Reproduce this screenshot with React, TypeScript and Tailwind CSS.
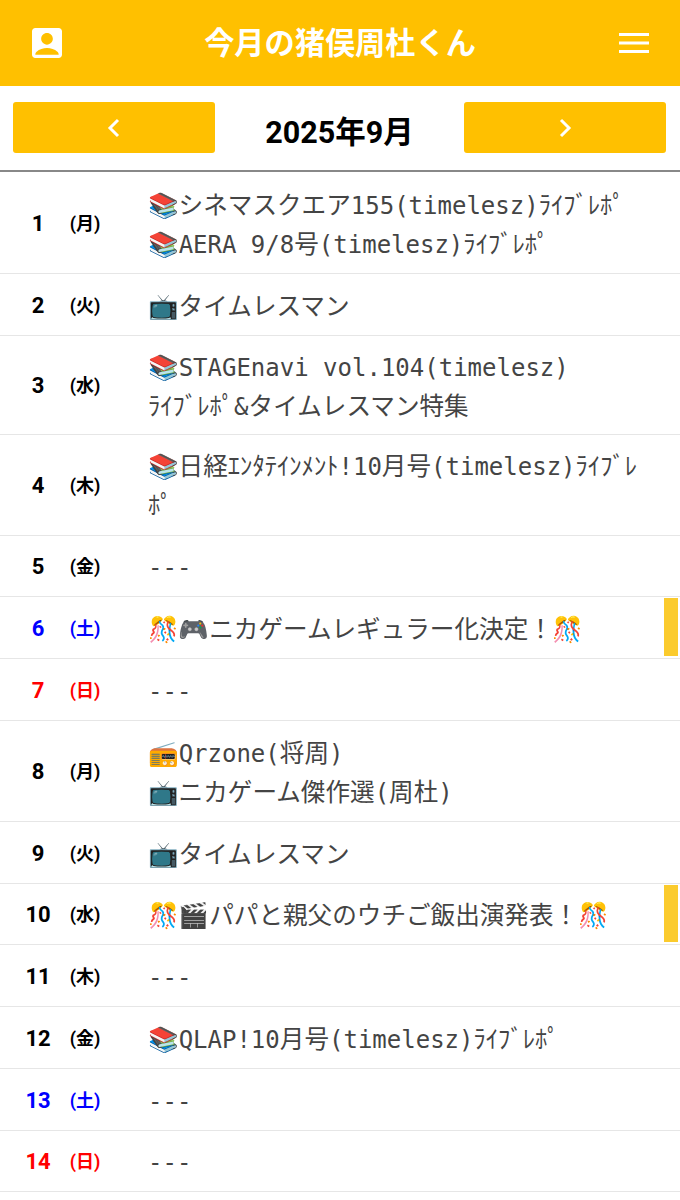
import { MdAccountBox } from 'react-icons/md';

type Day = { d: number; w: string; lines: string[]; mark?: boolean; tight?: boolean };

const days: Day[] = [
  { d: 1, w: '月', lines: ['📚シネマスクエア155(timelesz)ﾗｲﾌﾞﾚﾎﾟ', '📚AERA 9/8号(timelesz)ﾗｲﾌﾞﾚﾎﾟ'] },
  { d: 2, w: '火', lines: ['📺タイムレスマン'] },
  { d: 3, w: '水', lines: ['📚STAGEnavi vol.104(timelesz)', 'ﾗｲﾌﾞﾚﾎﾟ&タイムレスマン特集'], tight: true },
  { d: 4, w: '木', lines: ['📚日経ｴﾝﾀﾃｲﾝﾒﾝﾄ!10月号(timelesz)ﾗｲﾌﾞﾚ', 'ﾎﾟ'] },
  { d: 5, w: '金', lines: ['---'] },
  { d: 6, w: '土', lines: ['🎊🎮ニカゲームレギュラー化決定！🎊'], mark: true },
  { d: 7, w: '日', lines: ['---'] },
  { d: 8, w: '月', lines: ['📻Qrzone(将周)', '📺ニカゲーム傑作選(周杜)'] },
  { d: 9, w: '火', lines: ['📺タイムレスマン'] },
  { d: 10, w: '水', lines: ['🎊🎬パパと親父のウチご飯出演発表！🎊'], mark: true },
  { d: 11, w: '木', lines: ['---'] },
  { d: 12, w: '金', lines: ['📚QLAP!10月号(timelesz)ﾗｲﾌﾞﾚﾎﾟ'] },
  { d: 13, w: '土', lines: ['---'] },
  { d: 14, w: '日', lines: ['---'] },
];

// ascii runs are a little smaller than the kana around them
function Line({ text }: { text: string }) {
  const parts = text.split(/([\x20-\x7e]+)/).filter(Boolean);
  return (
    <>
      {parts.map((p, i) =>
        /^[\x20-\x7e]+$/.test(p) ? (
          <span key={i} className="text-[24px]">{p}</span>
        ) : (
          <span key={i}>{p}</span>
        )
      )}
    </>
  );
}

function Row({ day }: { day: Day }) {
  const color = day.w === '土' ? 'text-[#0000ff]' : day.w === '日' ? 'text-[#ff0000]' : 'text-black';
  return (
    <div className="flex items-center border-b border-[#e6e6e6] relative">
      <div className={`w-[76px] pt-[2px] text-center text-[22px] font-bold ${color}`}>{day.d}</div>
      <div className={`w-[18px] pt-[2px] text-[18px] font-bold whitespace-nowrap flex justify-center ${color}`}>({day.w})</div>
      <div className="ml-[54px] w-[500px] pt-[12.8px] pb-[8.95px] text-[24.6px] leading-[39px] text-[#444444] font-['DejaVu_Sans_Mono','Noto_Sans_CJK_JP','Noto_Color_Emoji',monospace]">
        {day.lines.map((l, i) => (
          <div
            key={l}
            className={`whitespace-nowrap ${i === 1 ? (day.tight ? 'h-[37.3px]' : 'h-[39.3px]') : 'h-[39px]'}`}
          >
            <Line text={l} />
          </div>
        ))}
      </div>
      {day.mark && <div className="absolute right-[2px] top-[1px] bottom-[2px] w-[14px] bg-[#fbcb2d]" />}
    </div>
  );
}

export default function App() {
  return (
    <div className="w-[680px] h-[1200px] overflow-hidden bg-white font-['Roboto','Noto_Sans_CJK_JP',sans-serif]">
      <header className="h-[86px] bg-[#ffc000] flex items-center justify-between pl-[27px] pr-[31px] text-white">
        <MdAccountBox className="w-[40px] h-[40px]" />
        <h1 className="pt-[2px] text-[30.2px] font-bold">今月の猪俣周杜くん</h1>
        <div className="w-[36px] flex justify-end">
          <svg width="30" height="20" viewBox="0 0 30 20" fill="white">
            <rect x="0" y="0" width="30" height="3" />
            <rect x="0" y="8.5" width="30" height="3" />
            <rect x="0" y="17" width="30" height="3" />
          </svg>
        </div>
      </header>
      <nav className="h-[86px] flex items-center justify-between pl-[13px] pr-[14px] border-b-2 border-[#888888]">
        <button className="w-[202px] h-[51px] -mt-[1px] bg-[#ffc000] rounded-[3px] flex items-center justify-center">
          <svg width="14" height="20" viewBox="0 0 14 20" fill="none" stroke="white" strokeWidth="3">
            <path d="M11 2 3 10l8 8" />
          </svg>
        </button>
        <div className="pt-[10px] text-[30.5px] font-bold text-black">2025年9月</div>
        <button className="w-[202px] h-[51px] -mt-[1px] bg-[#ffc000] rounded-[3px] flex items-center justify-center">
          <svg width="14" height="20" viewBox="0 0 14 20" fill="none" stroke="white" strokeWidth="3">
            <path d="M3 2l8 8-8 8" />
          </svg>
        </button>
      </nav>
      <main className="pt-[0.8px]">
        {days.map((day) => (
          <Row key={day.d} day={day} />
        ))}
      </main>
    </div>
  );
}
